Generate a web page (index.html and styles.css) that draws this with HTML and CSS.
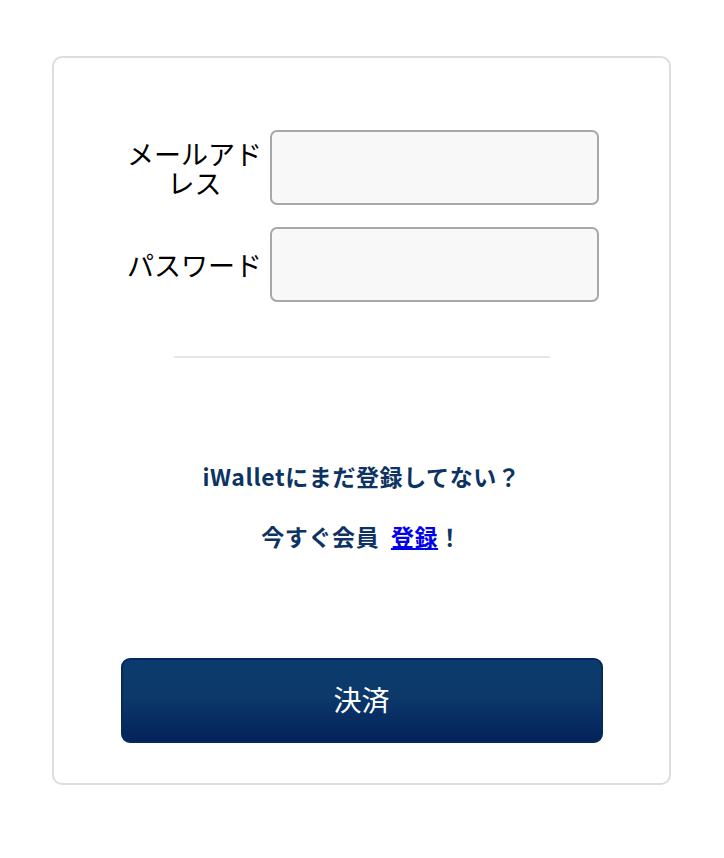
FILE: index.html
```html
<!DOCTYPE html>
<html lang="ja">
<head>
<meta charset="utf-8">
<link rel="stylesheet" href="styles.css">
</head>
<body>
<div class="card">
  <div class="form">
    <div class="row">
      <label class="label">メールアドレス</label>
      <div class="input"></div>
    </div>
    <div class="row">
      <label class="label">パスワード</label>
      <div class="input"></div>
    </div>
  </div>
  <div class="divider"></div>
  <p class="note">iWalletにまだ登録してない？</p>
  <p class="note second">今すぐ会員&nbsp;&nbsp;<a href="#" class="link">登録</a>！</p>
  <button class="pay">決済</button>
</div>
</body>
</html>
```
FILE: styles.css
```css
body {
  margin: 0;
  background: #fff;
  font-family: "Noto Sans CJK JP", "Noto Sans", sans-serif;
}
.card {
  margin: 56px 0 0 52px;
  width: 619px;
  height: 729px;
  box-sizing: border-box;
  border: 2px solid #dddddd;
  border-radius: 10px;
  padding-top: 72px;
}
.form {
  width: 474px;
  margin: 0 auto;
}
.row {
  display: flex;
  align-items: center;
  gap: 5px;
  height: 75px;
  margin-bottom: 22px;
}
.label {
  width: 140px;
  text-align: center;
  font-size: 27px;
  line-height: 29px;
  color: #000;
}
.input {
  width: 329px;
  height: 75px;
  box-sizing: border-box;
  border: 2px solid #a8a8a8;
  border-radius: 7px;
  background: #f8f8f8;
}
.divider {
  width: 376px;
  height: 2px;
  background: #e6e6e6;
  margin: 54px auto 0;
}
.note {
  margin: 104px 0 0;
  text-align: center;
  font-size: 23px;
  line-height: 28px;
  font-weight: 700;
  letter-spacing: 0.6px;
  color: #0c3363;
}
.note.second {
  margin-top: 32px;
}
.link {
  color: #0000ee;
  text-decoration: underline;
}
.pay {
  display: block;
  margin: 108px auto 0;
  width: 482px;
  height: 85px;
  border: 2px solid #04295c;
  border-radius: 9px;
  background: linear-gradient(#0b3b6d 0%, #0c396a 45%, #072c62 75%, #03235a 100%);
  color: #fff;
  font-family: "Noto Sans CJK JP", sans-serif;
  font-size: 28px;
  padding: 0 0 4px;
}
```
